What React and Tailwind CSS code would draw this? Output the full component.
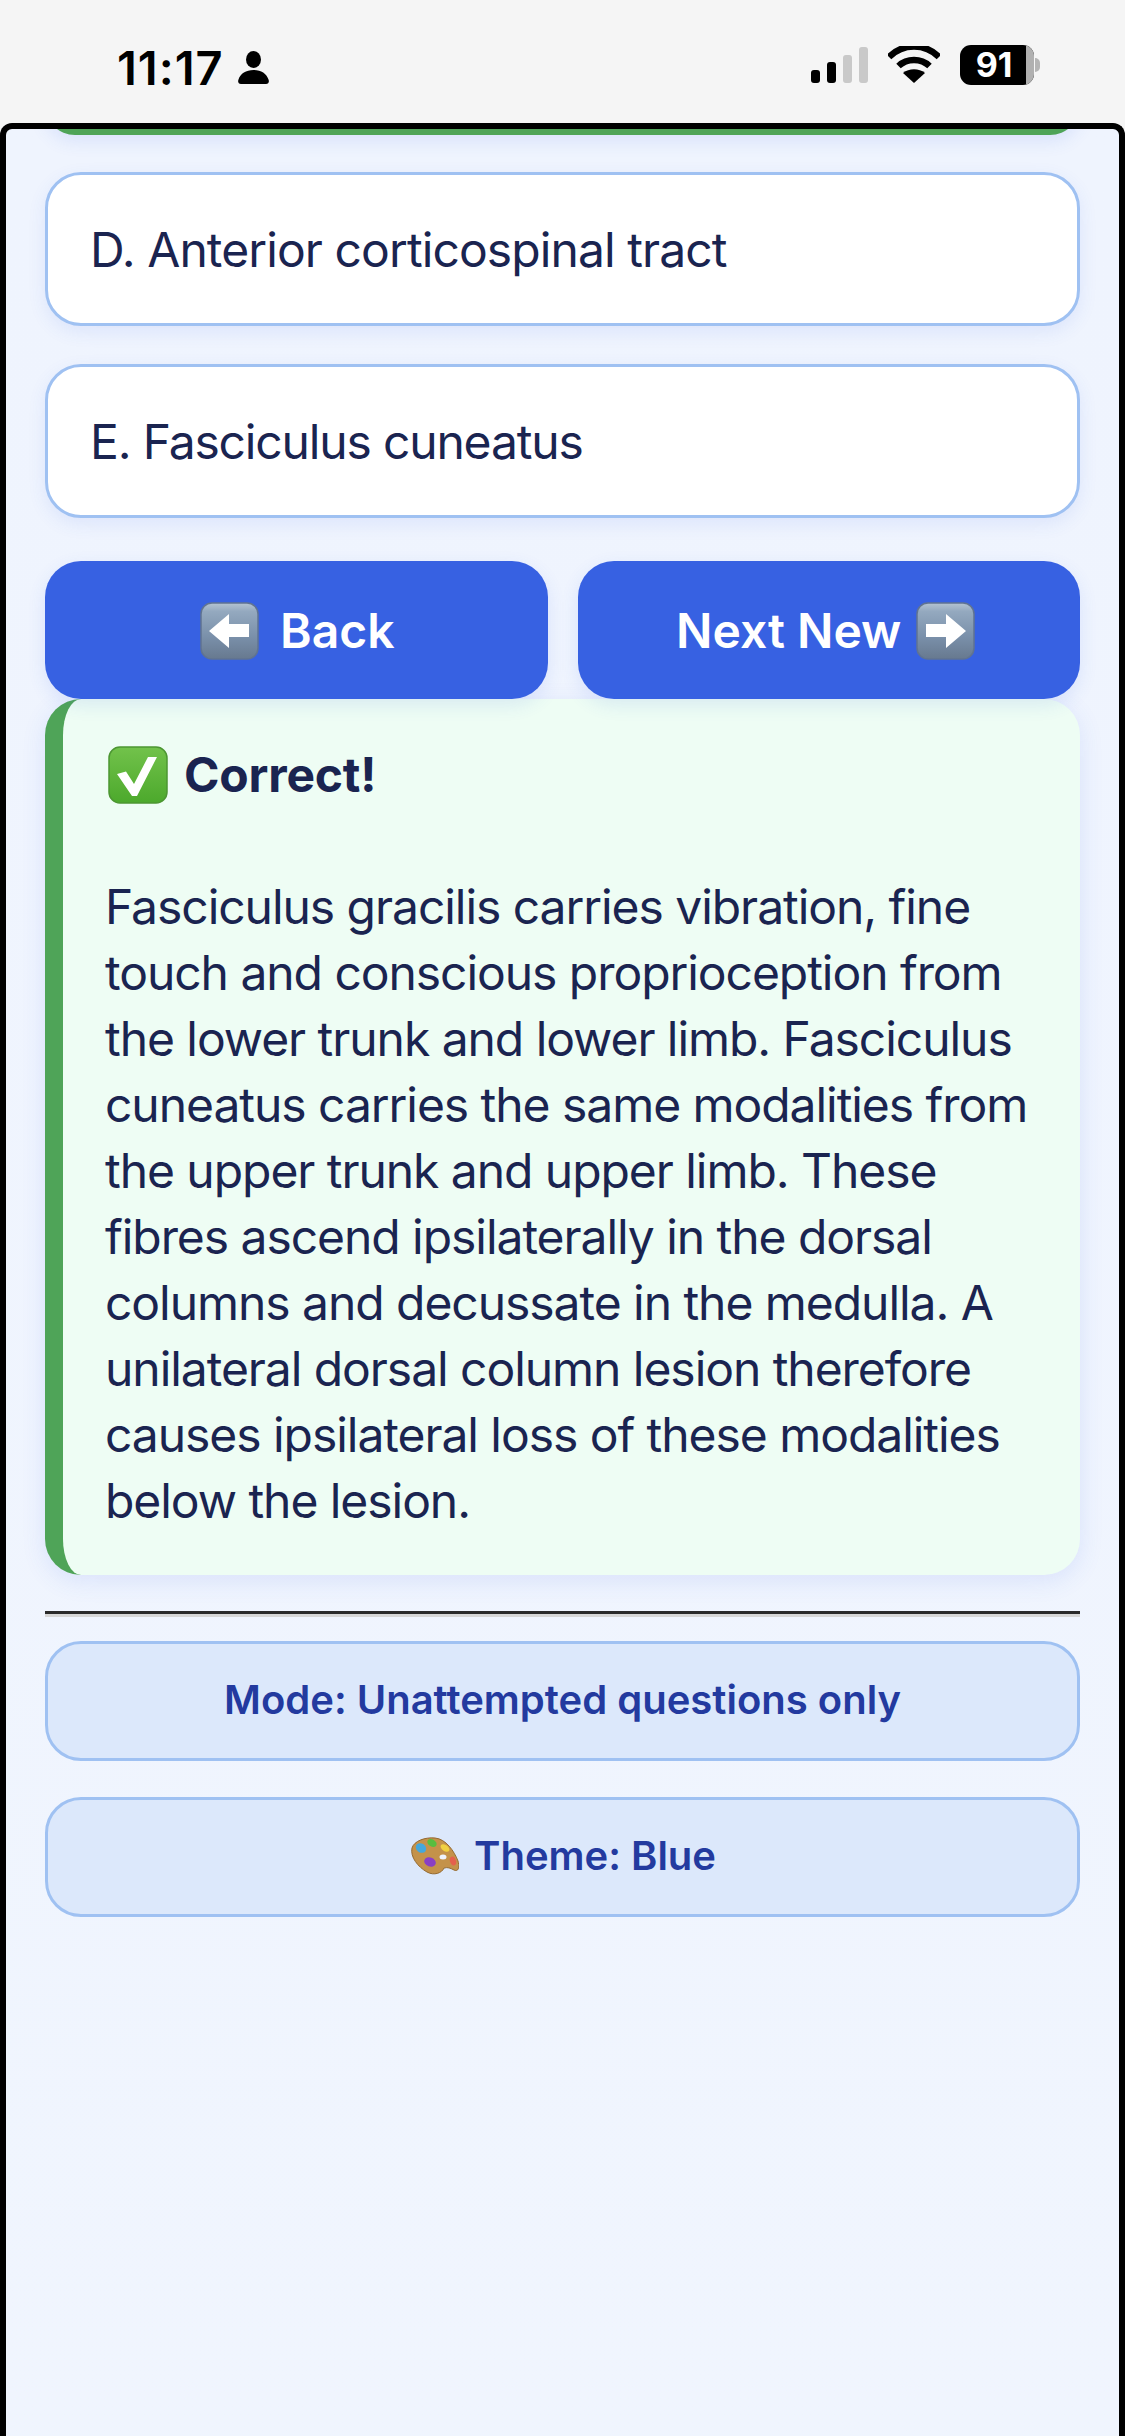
const F = { fontFamily: 'Inter, "Liberation Sans", sans-serif' };

function Signal() {
  return (
    <svg width="57" height="38" viewBox="0 0 57 38">
      <rect x="0" y="24" width="9" height="13" rx="3" fill="#000" />
      <rect x="16" y="16" width="9" height="21" rx="3" fill="#000" />
      <rect x="32" y="9" width="9" height="28" rx="3" fill="#c9c9c9" />
      <rect x="48" y="1" width="9" height="36" rx="3" fill="#c9c9c9" />
    </svg>
  );
}

function Wifi() {
  return (
    <svg width="52" height="38" viewBox="0 0 52 38">
      <path d="M1 11 C15 -3 37 -3 51 11" stroke="#000" strokeWidth="6.5" fill="none" />
      <path d="M10.5 20 C19 12 33 12 41.5 20" stroke="#000" strokeWidth="6.5" fill="none" />
      <path d="M26 37 L15 27 C21 22 31 22 37 27 Z" fill="#000" />
    </svg>
  );
}

function Battery() {
  return (
    <div className="flex items-center">
      <div className="w-[74px] h-[40px] rounded-[11px] bg-[#000] relative overflow-hidden flex items-center justify-center">
        <div className="absolute right-0 top-0 bottom-0 w-[8px] bg-[#b0b0b0]" />
        <span className="relative text-[34px] leading-none font-bold text-white pr-[6px]" style={F}>91</span>
      </div>
      <div className="w-[5px] h-[14px] rounded-r-[5px] bg-[#b5b5b5] ml-[1px]" />
    </div>
  );
}

function Person() {
  return (
    <svg width="31" height="33" viewBox="0 0 31 33" className="shrink-0">
      <ellipse cx="15.5" cy="8.5" rx="7.5" ry="8.5" fill="#000" />
      <path d="M3 33 C0.5 33 -0.5 31 0.5 28.5 C2.5 22.5 8 19 15.5 19 C23 19 28.5 22.5 30.5 28.5 C31.5 31 30.5 33 28 33 Z" fill="#000" />
    </svg>
  );
}

function ArrowKey({ dir }) {
  const id = "k" + dir;
  return (
    <svg width="59" height="58" viewBox="0 0 59 58" className="shrink-0">
      <defs>
        <linearGradient id={id} x1="0" y1="0" x2="0" y2="1">
          <stop offset="0" stopColor="#b4c4d2" />
          <stop offset="0.15" stopColor="#94a9bf" />
          <stop offset="0.6" stopColor="#7a90aa" />
          <stop offset="1" stopColor="#67798f" />
        </linearGradient>
      </defs>
      <rect x="1" y="1" width="57" height="56" rx="11" fill={"url(#" + id + ")"} stroke="#607391" strokeWidth="1.5" />
      <path
        d={dir === "left" ? "M9 29 L29 12 V22 H49 V35 H29 V46 Z" : "M50 29 L30 12 V22 H10 V35 H30 V46 Z"}
        fill="#fff"
      />
    </svg>
  );
}

function CheckBox() {
  return (
    <svg width="60" height="58" viewBox="0 0 60 58" className="shrink-0">
      <defs>
        <linearGradient id="cg" x1="0" y1="0" x2="0" y2="1">
          <stop offset="0" stopColor="#72c24b" />
          <stop offset="1" stopColor="#4ca92c" />
        </linearGradient>
      </defs>
      <rect x="1" y="1" width="58" height="56" rx="11" fill="url(#cg)" stroke="#4c9632" strokeWidth="1.5" />
      <path d="M9 28 L18 25.5 L26 38 L40 11 H49 L29 50 H24 Z" fill="#fff" />
    </svg>
  );
}

function Palette() {
  return (
    <svg width="48" height="38" viewBox="0 0 48 38" className="shrink-0">
      <path d="M1 11 C3 4 14 0 24 1 C35 2 43 14 47 24 C49 31 47 35 43 33 C39 31 37 30 33 31 C31 36 23 39 16 35 C7 30 -1 20 1 11 Z" fill="#c4924a" stroke="#94692f" strokeWidth="1" />
      <ellipse cx="10" cy="11" rx="5.5" ry="4.5" fill="#44a8dc" transform="rotate(35 10 11)" />
      <ellipse cx="21" cy="6" rx="5" ry="3.5" fill="#58bd3f" transform="rotate(30 21 6)" />
      <ellipse cx="34" cy="11" rx="5" ry="3" fill="#f0d040" transform="rotate(35 34 11)" />
      <ellipse cx="19" cy="25" rx="6" ry="4.5" fill="#8a3fc4" transform="rotate(20 19 25)" />
      <ellipse cx="42" cy="24" rx="3" ry="4.5" fill="#e4604c" transform="rotate(-20 42 24)" />
      <ellipse cx="32" cy="20" rx="3.5" ry="2.5" fill="#eef3fd" />
    </svg>
  );
}

const optionCls =
  "h-[154px] rounded-[36px] border-[3px] border-[#9fc1f2] bg-white flex items-center px-[42px] pt-[2px] text-[48px] text-[#1a2450] shadow-[0_6px_18px_rgba(60,100,230,0.10)]";
const navCls =
  "h-[138px] rounded-[36px] bg-[#3761e2] flex items-center justify-center text-white text-[48px] font-semibold pt-[2px] shadow-[0_6px_18px_rgba(60,100,230,0.12)]";
const ctlCls =
  "h-[120px] rounded-[36px] border-[3px] border-[#9fc1f2] bg-[#dce8fb] flex items-center justify-center text-[40px] font-semibold text-[#233a9f] pb-[3px]";

const explanation =
  "Fasciculus gracilis carries vibration, fine touch and conscious proprioception from the lower trunk and lower limb. Fasciculus cuneatus carries the same modalities from the upper trunk and upper limb. These fibres ascend ipsilaterally in the dorsal columns and decussate in the medulla. A unilateral dorsal column lesion therefore causes ipsilateral loss of these modalities below the lesion.";

export default function App() {
  return (
    <div className="w-[1125px] h-[2436px] bg-[#f5f5f5] flex flex-col overflow-hidden" style={F}>
      <div className="h-[123px] shrink-0 flex items-start justify-between pl-[117px] pr-[85px] pt-[42px]">
        <div className="flex items-center gap-[14px] h-[50px]">
          <span className="text-[47px] leading-none font-semibold text-black tracking-[1px]">11:17</span>
          <Person />
        </div>
        <div className="flex items-center gap-[20px] h-[50px] -mt-[2px]">
          <Signal />
          <Wifi />
          <Battery />
        </div>
      </div>

      <div className="flex-1 bg-gradient-to-b from-[#eff4fe] to-[#f0f5fe] border-x-[6px] border-t-[6px] border-black rounded-t-[12px] px-[39px] flex flex-col overflow-hidden">
        <div className="h-[60px] -mt-[54px] rounded-[36px] bg-[#4fa458] shadow-[0_6px_18px_rgba(60,100,230,0.12)] shrink-0" />
        <div className="h-[37px] shrink-0" />
        <div className={optionCls + " tracking-[-0.9px]"}>D. Anterior corticospinal tract</div>
        <div className="h-[38px] shrink-0" />
        <div className={optionCls + " tracking-[-1.17px]"}>E. Fasciculus cuneatus</div>
        <div className="h-[43px] shrink-0" />
        <div className="grid grid-cols-2 gap-[30px] shrink-0 relative z-10">
          <div className={navCls + " gap-[21px] pl-[2px]"}>
            <ArrowKey dir="left" />
            <span>Back</span>
          </div>
          <div className={navCls + " gap-[15px] pr-[6px]"}>
            <span>Next New</span>
            <ArrowKey dir="right" />
          </div>
        </div>
        <div className="h-[876px] shrink-0 rounded-[36px] border-l-[18px] border-[#4fa458] bg-[#eefdf4] pl-[42px] pr-[30px] pt-[47px] text-[#1a2450] shadow-[0_6px_24px_rgba(60,100,230,0.12)]">
          <div className="flex items-center gap-[16px] h-[58px] ml-[3px] text-[48px] tracking-[-0.2px] font-bold">
            <CheckBox />
            <span>Correct!</span>
          </div>
          <p className="mt-[70px] text-[48px] tracking-[-1.05px] leading-[66px]">{explanation}</p>
        </div>
        <div className="mt-[36px] h-[6px] shrink-0 border-t-[3px] border-[#2a2a2a] bg-[#d6d6d6]" />
        <div className="h-[24px] shrink-0" />
        <div className={ctlCls}>Mode: Unattempted questions only</div>
        <div className="h-[36px] shrink-0" />
        <div className={ctlCls + " gap-[15px] pl-[2px]"}>
          <Palette />
          <span>Theme: Blue</span>
        </div>
      </div>
    </div>
  );
}
